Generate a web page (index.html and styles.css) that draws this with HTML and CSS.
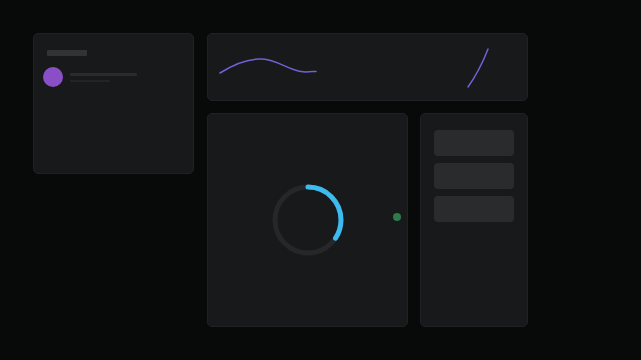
FILE: index.html
```html
<!DOCTYPE html>
<html lang="en">
<head>
    <meta charset="UTF-8">
    <meta name="viewport" content="width=device-width, initial-scale=1.0">
    <title>Dashboard Skeleton</title>
    <link rel="stylesheet" href="styles.css">
</head>
<body>
    <div class="board">
        <div class="card profile">
            <div class="bar title-bar"></div>
            <div class="user-row">
                <div class="avatar"></div>
                <div class="user-lines">
                    <div class="bar line-long"></div>
                    <div class="bar line-short"></div>
                </div>
            </div>
        </div>

        <div class="main">
            <div class="card chart">
                <svg class="chart-svg" viewBox="0 0 321 68" width="321" height="68">
                    <path d="M13 40 C27 31 41 25.5 55 26 C70 26.5 82 37.5 96 38.8 C101 39.2 105 38.6 109 38.4" />
                    <path d="M261 54 Q273 37 281 16" />
                </svg>
            </div>

            <div class="lower">
                <div class="card loader">
                    <svg class="ring" viewBox="0 0 74 74" width="74" height="74">
                        <circle class="ring-track" cx="37" cy="37" r="33" />
                        <circle class="ring-fill" cx="37" cy="37" r="33" />
                    </svg>
                    <span class="status-dot"></span>
                </div>

                <div class="card list">
                    <div class="list-item"></div>
                    <div class="list-item"></div>
                    <div class="list-item"></div>
                </div>
            </div>
        </div>
    </div>
</body>
</html>
```

FILE: styles.css
```css
:root {
    --bg-color: #080909;
    --card-bg: #18191b;
    --card-border: #202124;
    --skeleton: #2a2b2d;
    --accent-purple: #8a4fc6;
    --line-color: #6d62d6;
    --ring-color: #3dbaf0;
    --dot-color: #2f7a4b;
}

body {
    margin: 0;
    height: 100vh;
    background: var(--bg-color);
    overflow: hidden;
    font-family: "Liberation Sans", Arial, sans-serif;
}

.board {
    display: grid;
    grid-template-columns: 161px 321px;
    column-gap: 13px;
    align-items: start;
    padding: 33px;
}

.card {
    box-sizing: border-box;
    background-color: var(--card-bg);
    border: 1px solid var(--card-border);
    border-radius: 5px;
}

.bar {
    background-color: var(--skeleton);
    border-radius: 1px;
}

.profile {
    height: 141px;
    padding: 16px 9px;
}

.title-bar {
    width: 40px;
    height: 6px;
    margin-left: 4px;
    background-color: #323335;
}

.user-row {
    display: flex;
    align-items: center;
    gap: 7px;
    margin-top: 11px;
}

.avatar {
    width: 20px;
    height: 20px;
    border-radius: 50%;
    background-color: var(--accent-purple);
}

.user-lines {
    display: flex;
    flex-direction: column;
    gap: 4px;
}

.line-long {
    width: 67px;
    height: 3px;
}

.line-short {
    width: 40px;
    height: 2px;
    background-color: #232426;
}

.main {
    display: flex;
    flex-direction: column;
    gap: 12px;
}

.chart {
    height: 68px;
    overflow: hidden;
}

.chart-svg {
    display: block;
    margin: -1px;
}

.chart-svg path {
    fill: none;
    stroke: var(--line-color);
    stroke-width: 1.5;
    stroke-linecap: round;
}

.lower {
    display: flex;
    gap: 12px;
}

.loader {
    position: relative;
    width: 201px;
    height: 214px;
    display: flex;
    justify-content: center;
    align-items: center;
}

.ring {
    display: block;
    transform: rotate(-90deg);
}

.ring circle {
    fill: none;
    stroke-width: 5;
}

.ring-track {
    stroke: #262729;
}

.ring-fill {
    stroke: var(--ring-color);
    stroke-linecap: round;
    stroke-dasharray: 73 207;
    stroke-dashoffset: 2;
}

.status-dot {
    position: absolute;
    right: 6px;
    top: 99px;
    width: 8px;
    height: 8px;
    border-radius: 50%;
    background-color: var(--dot-color);
}

.list {
    width: 108px;
    height: 214px;
    display: flex;
    flex-direction: column;
    gap: 7px;
    padding: 16px 13px 0;
}

.list-item {
    height: 26px;
    border-radius: 4px;
    background-color: var(--skeleton);
}
```
